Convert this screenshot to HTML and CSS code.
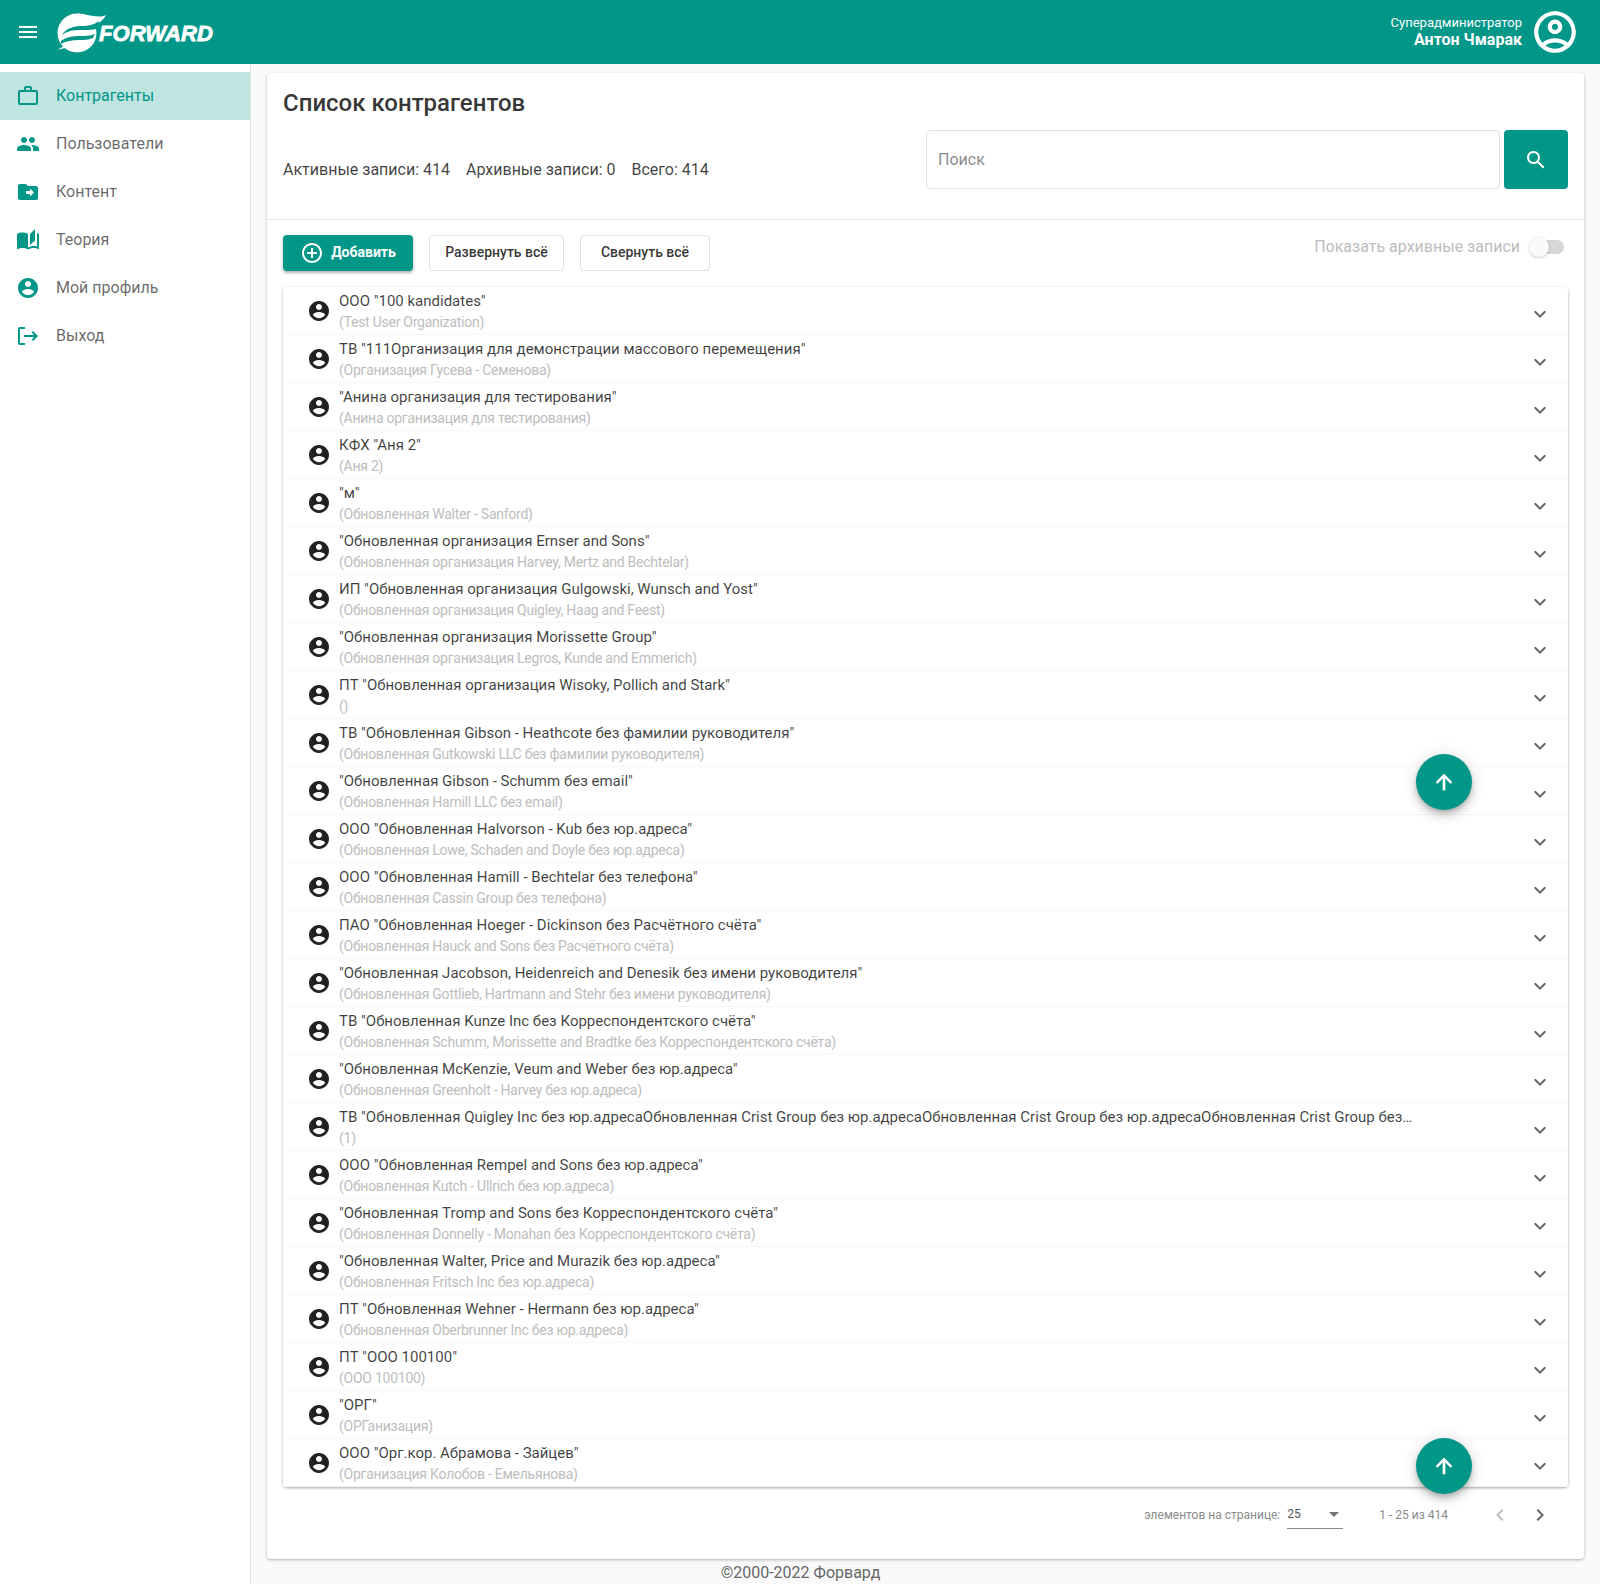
FILE: index.html
```html
<!DOCTYPE html>
<html lang="ru">
<head>
<meta charset="utf-8">
<title>Список контрагентов</title>
<link rel="stylesheet" href="styles.css">
</head>
<body>
<svg class="defs" aria-hidden="true">
  <symbol id="i-acc" viewBox="0 0 24 24"><path d="M12 2C6.48 2 2 6.48 2 12s4.48 10 10 10 10-4.48 10-10S17.52 2 12 2zm0 3c1.66 0 3 1.34 3 3s-1.34 3-3 3-3-1.34-3-3 1.34-3 3-3zm0 14.2c-2.5 0-4.71-1.28-6-3.22.03-1.99 4-3.08 6-3.08 1.99 0 5.97 1.09 6 3.08-1.29 1.94-3.5 3.22-6 3.22z"/></symbol>
  <symbol id="i-more" viewBox="0 0 24 24"><path d="M16.59 8.59L12 13.17 7.41 8.59 6 10l6 6 6-6z"/></symbol>
  <symbol id="i-up" viewBox="0 0 24 24"><path d="M4 12l1.41 1.41L11 7.83V20h2V7.83l5.58 5.59L20 12l-8-8-8 8z"/></symbol>
</svg>

<header class="topbar">
  <div class="topbar-left">
    <svg class="menu-icon" viewBox="0 0 24 24"><path d="M3 18h18v-2H3v2zm0-5h18v-2H3v2zm0-7v2h18V6H3z"/></svg>
    <div class="logo">
      <svg class="logo-mark" viewBox="0 0 52 40">
        <circle cx="21" cy="20" r="19.5" fill="#fff"/>
        <path d="M22 .5C32 1 42 6 50 2c-3 6-9 11-20 11h-8z" fill="#fff"/>
        <path d="M6 22c4-7 12-9 20-9 6 0 12-1 17-5l-2 8c-5 1-11 1-16 1-8 0-14 1-19 5z" fill="#009688"/>
        <path d="M5 28c5-4 12-5 19-5 5 0 10 0 15-2l-2 4c-5 2-9 2-14 2-7 0-13 1-18 4z" fill="#009688"/>
        <path d="M0 37c5-1 9-6 16-8l4 4c-8 1-14 3-20 4z" fill="#fff"/>
      </svg>
      <span class="logo-text">FORWARD</span>
    </div>
  </div>
  <div class="user">
    <div class="user-text">
      <span class="user-role">Суперадминистратор</span>
      <span class="user-name">Антон Чмарак</span>
    </div>
    <svg class="user-icon" viewBox="0 0 24 24"><path d="M12 2C6.48 2 2 6.48 2 12s4.48 10 10 10 10-4.48 10-10S17.52 2 12 2zM7.35 18.5C8.66 17.56 10.26 17 12 17s3.34.56 4.65 1.5c-1.31.94-2.91 1.5-4.65 1.5s-3.34-.56-4.65-1.5zm10.79-1.38C16.45 15.8 14.32 15 12 15s-4.45.8-6.14 2.12C4.7 15.73 4 13.95 4 12c0-4.42 3.58-8 8-8s8 3.58 8 8c0 1.95-.7 3.73-1.86 5.12zM12 6c-1.93 0-3.5 1.57-3.5 3.5S10.07 13 12 13s3.5-1.57 3.5-3.5S13.93 6 12 6zm0 5c-.83 0-1.5-.67-1.5-1.5S11.17 8 12 8s1.5.67 1.5 1.5S12.83 11 12 11z"/></svg>
  </div>
</header>

<div class="layout">
  <nav class="sidebar">
    <a class="nav-item active"><svg class="nav-icon" viewBox="0 0 24 24"><path d="M14 6V4h-4v2h4zM4 8v11h16V8H4zm16-2c1.11 0 2 .89 2 2v11c0 1.11-.89 2-2 2H4c-1.11 0-2-.89-2-2l.01-11c0-1.11.88-2 1.99-2h4V4c0-1.11.89-2 2-2h4c1.11 0 2 .89 2 2v2h4z"/></svg>Контрагенты</a>
    <a class="nav-item"><svg class="nav-icon" viewBox="0 0 24 24"><path d="M16 11c1.66 0 2.99-1.34 2.99-3S17.66 5 16 5c-1.66 0-3 1.34-3 3s1.34 3 3 3zm-8 0c1.66 0 2.99-1.34 2.99-3S9.66 5 8 5C6.34 5 5 6.34 5 8s1.34 3 3 3zm0 2c-2.33 0-7 1.17-7 3.5V19h14v-2.5c0-2.33-4.67-3.5-7-3.5zm8 0c-.29 0-.62.02-.97.05 1.16.84 1.97 1.97 1.97 3.45V19h6v-2.5c0-2.33-4.67-3.5-7-3.5z"/></svg>Пользователи</a>
    <a class="nav-item"><svg class="nav-icon" viewBox="0 0 24 24"><path fill-rule="evenodd" d="M20 6h-8l-2-2H4c-1.1 0-1.99.9-1.99 2L2 18c0 1.1.9 2 2 2h16c1.1 0 2-.9 2-2V8c0-1.1-.9-2-2-2zm-6 10.5V14h-4v-3h4V8.5l4 4-4 4z"/></svg>Контент</a>
    <a class="nav-item"><svg class="nav-icon" viewBox="0 0 24 24"><path d="M19 1l-5 5v11l5-4.5V1zM1 6v14.65c0 .25.25.5.5.5.1 0 .15-.05.25-.05C3.1 20.45 5.05 20 6.5 20c1.95 0 4.05.4 5.5 1.5V6c-1.45-1.1-3.55-1.5-5.5-1.5S2.45 4.9 1 6zm22 13.5V6c-.6-.45-1.25-.75-2-1v13.5c-1.1-.35-2.3-.5-3.5-.5-1.7 0-4.15.65-5.5 1.5v2c1.35-.85 3.8-1.5 5.5-1.5 1.65 0 3.35.3 4.75 1.05.1.05.15.05.25.05.25 0 .5-.25.5-.5v-1.1z"/></svg>Теория</a>
    <a class="nav-item"><svg class="nav-icon" viewBox="0 0 24 24"><use href="#i-acc"/></svg>Мой профиль</a>
    <a class="nav-item"><svg class="nav-icon" viewBox="0 0 24 24"><path d="M17 7l-1.41 1.41L18.17 11H8v2h10.17l-2.58 2.58L17 17l5-5zM4 5h5V3H4c-1.1 0-2 .9-2 2v14c0 1.1.9 2 2 2h5v-2H4V5z"/></svg>Выход</a>
  </nav>

  <main class="main">
    <section class="card">
      <div class="card-head">
        <h1 class="title">Список контрагентов</h1>
        <div class="head-row">
          <div class="stats"><span>Активные записи: 414</span><span>Архивные записи: 0</span><span>Всего: 414</span></div>
          <div class="search">
            <input class="search-input" type="text" placeholder="Поиск">
            <button class="search-btn" type="button"><svg viewBox="0 0 24 24"><path d="M15.5 14h-.79l-.28-.27C15.41 12.59 16 11.11 16 9.5 16 5.91 13.09 3 9.5 3S3 5.91 3 9.5 5.91 16 9.5 16c1.61 0 3.09-.59 4.23-1.57l.27.28v.79l5 4.99L20.49 19l-4.99-5zm-6 0C7.01 14 5 11.99 5 9.5S7.01 5 9.5 5 14 7.01 14 9.5 11.99 14 9.5 14z"/></svg></button>
          </div>
        </div>
      </div>

      <div class="toolbar">
        <button class="btn btn-primary" type="button"><svg viewBox="0 0 24 24"><path d="M13 7h-2v4H7v2h4v4h2v-4h4v-2h-4V7zm-1-5C6.48 2 2 6.48 2 12s4.48 10 10 10 10-4.48 10-10S17.52 2 12 2zm0 18c-4.41 0-8-3.59-8-8s3.59-8 8-8 8 3.59 8 8-3.59 8-8 8z"/></svg>Добавить</button>
        <button class="btn btn-outline btn-expand" type="button">Развернуть всё</button>
        <button class="btn btn-outline btn-collapse" type="button">Свернуть всё</button>
        <div class="archive"><span>Показать архивные записи</span><span class="toggle"><span class="thumb"></span></span></div>
      </div>

      <ul class="list">
        <li class="row"><svg class="row-icon"><use href="#i-acc"/></svg><div class="row-text"><div class="row-title">ООО "100 kandidates"</div><div class="row-sub">(Test User Organization)</div></div><svg class="row-more"><use href="#i-more"/></svg></li>
        <li class="row"><svg class="row-icon"><use href="#i-acc"/></svg><div class="row-text"><div class="row-title">ТВ "111Организация для демонстрации массового перемещения"</div><div class="row-sub">(Организация Гусева - Семенова)</div></div><svg class="row-more"><use href="#i-more"/></svg></li>
        <li class="row"><svg class="row-icon"><use href="#i-acc"/></svg><div class="row-text"><div class="row-title">"Анина организация для тестирования"</div><div class="row-sub">(Анина организация для тестирования)</div></div><svg class="row-more"><use href="#i-more"/></svg></li>
        <li class="row"><svg class="row-icon"><use href="#i-acc"/></svg><div class="row-text"><div class="row-title">КФХ "Аня 2"</div><div class="row-sub">(Аня 2)</div></div><svg class="row-more"><use href="#i-more"/></svg></li>
        <li class="row"><svg class="row-icon"><use href="#i-acc"/></svg><div class="row-text"><div class="row-title">"м"</div><div class="row-sub">(Обновленная Walter - Sanford)</div></div><svg class="row-more"><use href="#i-more"/></svg></li>
        <li class="row"><svg class="row-icon"><use href="#i-acc"/></svg><div class="row-text"><div class="row-title">"Обновленная организация Ernser and Sons"</div><div class="row-sub">(Обновленная организация Harvey, Mertz and Bechtelar)</div></div><svg class="row-more"><use href="#i-more"/></svg></li>
        <li class="row"><svg class="row-icon"><use href="#i-acc"/></svg><div class="row-text"><div class="row-title">ИП "Обновленная организация Gulgowski, Wunsch and Yost"</div><div class="row-sub">(Обновленная организация Quigley, Haag and Feest)</div></div><svg class="row-more"><use href="#i-more"/></svg></li>
        <li class="row"><svg class="row-icon"><use href="#i-acc"/></svg><div class="row-text"><div class="row-title">"Обновленная организация Morissette Group"</div><div class="row-sub">(Обновленная организация Legros, Kunde and Emmerich)</div></div><svg class="row-more"><use href="#i-more"/></svg></li>
        <li class="row"><svg class="row-icon"><use href="#i-acc"/></svg><div class="row-text"><div class="row-title">ПТ "Обновленная организация Wisoky, Pollich and Stark"</div><div class="row-sub">()</div></div><svg class="row-more"><use href="#i-more"/></svg></li>
        <li class="row"><svg class="row-icon"><use href="#i-acc"/></svg><div class="row-text"><div class="row-title">ТВ "Обновленная Gibson - Heathcote без фамилии руководителя"</div><div class="row-sub">(Обновленная Gutkowski LLC без фамилии руководителя)</div></div><svg class="row-more"><use href="#i-more"/></svg></li>
        <li class="row"><svg class="row-icon"><use href="#i-acc"/></svg><div class="row-text"><div class="row-title">"Обновленная Gibson - Schumm без email"</div><div class="row-sub">(Обновленная Hamill LLC без email)</div></div><svg class="row-more"><use href="#i-more"/></svg></li>
        <li class="row"><svg class="row-icon"><use href="#i-acc"/></svg><div class="row-text"><div class="row-title">ООО "Обновленная Halvorson - Kub без юр.адреса"</div><div class="row-sub">(Обновленная Lowe, Schaden and Doyle без юр.адреса)</div></div><svg class="row-more"><use href="#i-more"/></svg></li>
        <li class="row"><svg class="row-icon"><use href="#i-acc"/></svg><div class="row-text"><div class="row-title">ООО "Обновленная Hamill - Bechtelar без телефона"</div><div class="row-sub">(Обновленная Cassin Group без телефона)</div></div><svg class="row-more"><use href="#i-more"/></svg></li>
        <li class="row"><svg class="row-icon"><use href="#i-acc"/></svg><div class="row-text"><div class="row-title">ПАО "Обновленная Hoeger - Dickinson без Расчётного счёта"</div><div class="row-sub">(Обновленная Hauck and Sons без Расчётного счёта)</div></div><svg class="row-more"><use href="#i-more"/></svg></li>
        <li class="row"><svg class="row-icon"><use href="#i-acc"/></svg><div class="row-text"><div class="row-title">"Обновленная Jacobson, Heidenreich and Denesik без имени руководителя"</div><div class="row-sub">(Обновленная Gottlieb, Hartmann and Stehr без имени руководителя)</div></div><svg class="row-more"><use href="#i-more"/></svg></li>
        <li class="row"><svg class="row-icon"><use href="#i-acc"/></svg><div class="row-text"><div class="row-title">ТВ "Обновленная Kunze Inc без Корреспондентского счёта"</div><div class="row-sub">(Обновленная Schumm, Morissette and Bradtke без Корреспондентского счёта)</div></div><svg class="row-more"><use href="#i-more"/></svg></li>
        <li class="row"><svg class="row-icon"><use href="#i-acc"/></svg><div class="row-text"><div class="row-title">"Обновленная McKenzie, Veum and Weber без юр.адреса"</div><div class="row-sub">(Обновленная Greenholt - Harvey без юр.адреса)</div></div><svg class="row-more"><use href="#i-more"/></svg></li>
        <li class="row"><svg class="row-icon"><use href="#i-acc"/></svg><div class="row-text"><div class="row-title">ТВ "Обновленная Quigley Inc без юр.адресаОбновленная Crist Group без юр.адресаОбновленная Crist Group без юр.адресаОбновленная Crist Group без…</div><div class="row-sub">(1)</div></div><svg class="row-more"><use href="#i-more"/></svg></li>
        <li class="row"><svg class="row-icon"><use href="#i-acc"/></svg><div class="row-text"><div class="row-title">ООО "Обновленная Rempel and Sons без юр.адреса"</div><div class="row-sub">(Обновленная Kutch - Ullrich без юр.адреса)</div></div><svg class="row-more"><use href="#i-more"/></svg></li>
        <li class="row"><svg class="row-icon"><use href="#i-acc"/></svg><div class="row-text"><div class="row-title">"Обновленная Tromp and Sons без Корреспондентского счёта"</div><div class="row-sub">(Обновленная Donnelly - Monahan без Корреспондентского счёта)</div></div><svg class="row-more"><use href="#i-more"/></svg></li>
        <li class="row"><svg class="row-icon"><use href="#i-acc"/></svg><div class="row-text"><div class="row-title">"Обновленная Walter, Price and Murazik без юр.адреса"</div><div class="row-sub">(Обновленная Fritsch Inc без юр.адреса)</div></div><svg class="row-more"><use href="#i-more"/></svg></li>
        <li class="row"><svg class="row-icon"><use href="#i-acc"/></svg><div class="row-text"><div class="row-title">ПТ "Обновленная Wehner - Hermann без юр.адреса"</div><div class="row-sub">(Обновленная Oberbrunner Inc без юр.адреса)</div></div><svg class="row-more"><use href="#i-more"/></svg></li>
        <li class="row"><svg class="row-icon"><use href="#i-acc"/></svg><div class="row-text"><div class="row-title">ПТ "ООО 100100"</div><div class="row-sub">(ООО 100100)</div></div><svg class="row-more"><use href="#i-more"/></svg></li>
        <li class="row"><svg class="row-icon"><use href="#i-acc"/></svg><div class="row-text"><div class="row-title">"ОРГ"</div><div class="row-sub">(ОРГанизация)</div></div><svg class="row-more"><use href="#i-more"/></svg></li>
        <li class="row"><svg class="row-icon"><use href="#i-acc"/></svg><div class="row-text"><div class="row-title">ООО "Орг.кор. Абрамова - Зайцев"</div><div class="row-sub">(Организация Колобов - Емельянова)</div></div><svg class="row-more"><use href="#i-more"/></svg></li>
      </ul>

      <div class="pager">
        <span class="pager-label">элементов на странице:</span>
        <div class="pager-select"><span>25</span><span class="caret"></span></div>
        <span class="pager-range">1 - 25 из 414</span>
        <svg class="pager-arrow off" viewBox="0 0 24 24"><path d="M15.41 7.41L14 6l-6 6 6 6 1.41-1.41L10.83 12z"/></svg>
        <svg class="pager-arrow" viewBox="0 0 24 24"><path d="M10 6L8.59 7.41 13.17 12l-4.58 4.59L10 18l6-6z"/></svg>
      </div>

      <button class="fab fab-one" type="button"><svg><use href="#i-up"/></svg></button>
      <button class="fab fab-two" type="button"><svg><use href="#i-up"/></svg></button>
    </section>
    <footer class="footer">©2000-2022 Форвард</footer>
  </main>
</div>
</body>
</html>
```
FILE: styles.css
```css
* { box-sizing: border-box; }
html, body { margin: 0; padding: 0; }
body {
  height: 1584px;
  overflow: hidden;
  background: #fafafa;
  color: rgba(0, 0, 0, .87);
  font-family: Roboto, "Liberation Sans", sans-serif;
  font-size: 16px;
}
button, input { font-family: inherit; }
.defs { display: none; }

.topbar {
  height: 64px;
  background: #009688;
  color: #fff;
  display: flex;
  align-items: center;
  justify-content: space-between;
  padding: 0 20px 0 16px;
}
.topbar-left { display: flex; align-items: center; }
.menu-icon { width: 24px; height: 24px; fill: #fff; }
.logo { display: flex; align-items: center; margin-left: 16px; }
.logo-mark { width: 52px; height: 40px; margin-top: 1px; }
.logo-text {
  margin-left: -9px;
  margin-top: 3px;
  font-family: "Liberation Sans", sans-serif;
  font-size: 22px;
  font-weight: 700;
  font-style: italic;
  letter-spacing: .1px;
  -webkit-text-stroke: .8px #fff;
  color: #fff;
}
.user { display: flex; align-items: center; gap: 8px; }
.user-text { display: flex; flex-direction: column; align-items: flex-end; }
.user-role { font-size: 13px; line-height: 16px; }
.user-name { font-size: 16px; font-weight: 700; line-height: 18px; }
.user-icon { width: 50px; height: 50px; fill: #fff; }

.layout { display: flex; height: 1520px; }
.sidebar {
  width: 251px;
  flex: none;
  background: #fff;
  border-right: 1px solid #e0e0e0;
  padding-top: 8px;
}
.nav-item {
  height: 48px;
  display: flex;
  align-items: center;
  gap: 16px;
  padding: 0 0 2px 16px;
  color: rgba(0, 0, 0, .6);
  font-size: 16px;
}
.nav-item.active { background: #bfe5e1; color: #009688; }
.nav-icon { width: 24px; height: 24px; margin-top: 2px; fill: #009688; flex: none; }

.main { flex: 1; min-width: 0; padding: 9px 16px 0; }
.card {
  position: relative;
  height: 1486px;
  background: #fff;
  border-radius: 4px;
  box-shadow: 0 1px 3px rgba(0, 0, 0, .3);
}
.card-head {
  height: 147px;
  padding: 16px;
  border-bottom: 1px solid #e0e0e0;
}
.title { margin: 0; font-size: 24px; font-weight: 500; line-height: 28px; color: rgba(0, 0, 0, .8); }
.head-row {
  display: flex;
  justify-content: space-between;
  align-items: center;
  margin-top: 13px;
}
.stats { display: flex; gap: 16px; margin-top: 20px; font-size: 16px; color: rgba(0, 0, 0, .75); }
.search { display: flex; gap: 4px; }
.search-input {
  width: 574px;
  height: 59px;
  border: 1px solid #e0e0e0;
  border-radius: 4px;
  padding: 0 11px;
  font-size: 16px;
  outline: none;
}
.search-input::placeholder { color: #8c8c8c; opacity: 1; }
.search-btn {
  width: 64px;
  height: 59px;
  border: 0;
  border-radius: 4px;
  background: #009688;
  display: flex;
  align-items: center;
  justify-content: center;
  padding: 0;
}
.search-btn svg { width: 24px; height: 24px; fill: #fff; }

.toolbar { display: flex; align-items: flex-start; gap: 16px; padding: 15px 16px 16px; }
.btn {
  height: 36px;
  border-radius: 4px;
  font-size: 14px;
  font-weight: 500;
  padding: 0 0 2px;
  display: flex;
  align-items: center;
  justify-content: center;
}
.btn-primary {
  width: 130px;
  gap: 7px;
  border: 0;
  background: #009688;
  color: #fff;
  font-weight: 700;
  box-shadow: 0 2px 3px rgba(0, 0, 0, .3);
}
.btn-primary svg { width: 24px; height: 24px; margin-top: 2px; fill: #fff; }
.btn-outline { background: #fff; border: 1px solid #e0e0e0; color: rgba(0, 0, 0, .8); }
.btn-expand { width: 135px; }
.btn-collapse { width: 130px; }
.archive {
  margin-left: auto;
  height: 24px;
  display: flex;
  align-items: center;
  gap: 10px;
  color: #bdbdbd;
  margin-top: -1px;
  margin-right: 4px;
}
.toggle {
  position: relative;
  display: block;
  width: 26px;
  height: 14px;
  border-radius: 7px;
  background: #d6d6d6;
  margin: 1px 0 0 8px;
}
.thumb {
  position: absolute;
  left: -9px;
  top: -3px;
  width: 20px;
  height: 20px;
  border-radius: 50%;
  background: #fafafa;
  box-shadow: 0 1px 3px rgba(0, 0, 0, .2);
}

.list {
  list-style: none;
  margin: 0 16px;
  padding: 0;
  border-radius: 4px;
  box-shadow: 0 1px 3px rgba(0, 0, 0, .35);
}
.row {
  height: 48px;
  display: flex;
  align-items: center;
  padding: 0 16px 0 24px;
  box-shadow: inset 0 -1px 0 #f5f5f5;
}
.row-icon { width: 24px; height: 24px; fill: rgba(0, 0, 0, .87); flex: none; }
.row-text { width: 1076px; margin: 2px 0 0 8px; flex: none; }
.row-title {
  font-size: 15px;
  line-height: 20px;
  white-space: nowrap;
  color: rgba(0, 0, 0, .75);
}
.row-sub {
  font-size: 14px;
  letter-spacing: -.25px;
  line-height: 22px;
  color: #bdbdbd;
  white-space: nowrap;
}
.row-more { width: 24px; height: 24px; margin-left: auto; margin-top: 5px; fill: #666; flex: none; }

.pager {
  height: 55px;
  display: flex;
  align-items: center;
  justify-content: flex-end;
  padding-right: 32px;
  font-size: 12px;
  color: #8a8a8a;
}
.pager-select {
  width: 56px;
  height: 28px;
  margin-left: 7px;
  border-bottom: 1px solid #8a8a8a;
  display: flex;
  align-items: center;
  justify-content: space-between;
  color: #555;
  padding-right: 4px;
}
.caret {
  width: 0;
  height: 0;
  border-left: 5px solid transparent;
  border-right: 5px solid transparent;
  border-top: 5px solid #757575;
}
.pager-range { margin-left: 36px; margin-right: 40px; }
.pager-arrow { width: 24px; height: 24px; fill: #666; margin-left: 16px; }
.pager-arrow.off { fill: #bdbdbd; margin-left: 0; }

.fab {
  position: absolute;
  left: 1149px;
  width: 56px;
  height: 56px;
  border: 0;
  border-radius: 50%;
  background: #009688;
  padding: 16px;
  box-shadow: 0 3px 5px -1px rgba(0, 0, 0, .2), 0 6px 10px rgba(0, 0, 0, .14), 0 1px 18px rgba(0, 0, 0, .12);
}
.fab svg { display: block; width: 24px; height: 24px; fill: #fff; stroke: #fff; stroke-width: .7; }
.fab-one { top: 681px; }
.fab-two { top: 1365px; }

.footer {
  padding-right: 250px;
  padding-top: 1px;
  text-align: center;
  color: #666;
  font-size: 16px;
  line-height: 25px;
  margin-left: -16px;
  margin-right: -16px;
}
```
